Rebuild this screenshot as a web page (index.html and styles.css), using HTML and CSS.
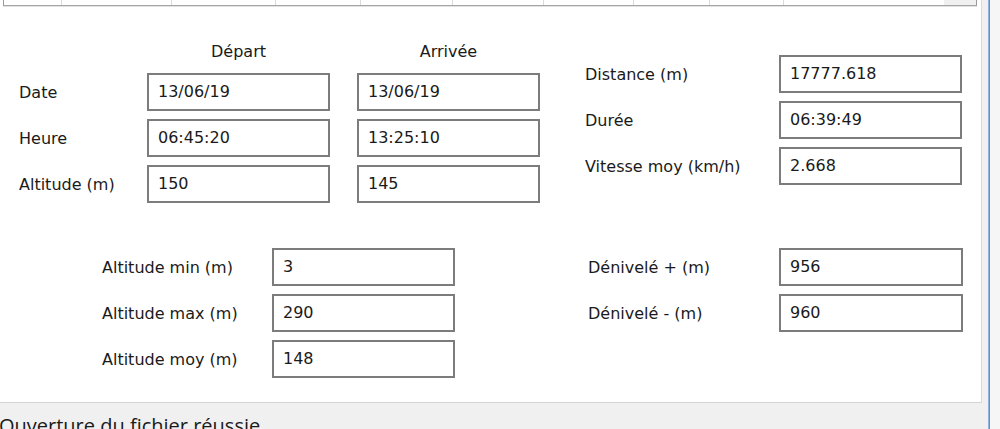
FILE: index.html
```html
<!DOCTYPE html>
<html lang="fr">
<head>
<meta charset="utf-8">
<title>Trace</title>
<link rel="stylesheet" href="styles.css">
</head>
<body>
<div class="window">
  <div class="main">
    <div class="panel">
      <div class="grid-view">
        <div class="gcell c1"></div>
        <div class="gcell c2"></div>
        <div class="gcell c3"></div>
        <div class="gcell c4"></div>
        <div class="gcell c5"></div>
        <div class="gcell c6"></div>
        <div class="gcell c7"></div>
        <div class="gcell c8"></div>
        <div class="gcell c9"></div>
        <div class="gcell c10"></div>
        <div class="gscroll"></div>
      </div>
      <div class="form">
        <div class="section top">
          <div class="grp grp-trip">
            <span class="hdr-empty"></span>
            <div class="hdr">Départ</div>
            <div class="hdr">Arrivée</div>
            <div class="lbl">Date</div>
            <div class="box">13/06/19</div>
            <div class="box">13/06/19</div>
            <div class="lbl">Heure</div>
            <div class="box">06:45:20</div>
            <div class="box">13:25:10</div>
            <div class="lbl">Altitude (m)</div>
            <div class="box">150</div>
            <div class="box">145</div>
          </div>
          <div class="grp grp-stats">
            <div class="lbl">Distance (m)</div>
            <div class="box">17777.618</div>
            <div class="lbl">Durée</div>
            <div class="box">06:39:49</div>
            <div class="lbl">Vitesse moy (km/h)</div>
            <div class="box">2.668</div>
          </div>
        </div>
        <div class="section bottom">
          <div class="grp grp-alt">
            <div class="lbl">Altitude min (m)</div>
            <div class="box">3</div>
            <div class="lbl">Altitude max (m)</div>
            <div class="box">290</div>
            <div class="lbl">Altitude moy (m)</div>
            <div class="box">148</div>
          </div>
          <div class="grp grp-deniv">
            <div class="lbl">Dénivelé + (m)</div>
            <div class="box">956</div>
            <div class="lbl">Dénivelé - (m)</div>
            <div class="box">960</div>
          </div>
        </div>
      </div>
    </div>
    <div class="status">Ouverture du fichier réussie</div>
  </div>
  <div class="splitter"></div>
  <div class="side"></div>
</div>
</body>
</html>
```

FILE: styles.css
```css
html, body {
  margin: 0;
  padding: 0;
  width: 1000px;
  height: 429px;
  overflow: hidden;
  background: #f0f0f0;
}

.window {
  display: flex;
  width: 1000px;
  height: 429px;
}

.main {
  width: 988px;
  height: 429px;
  display: flex;
  flex-direction: column;
  background: #f0f0f0;
  overflow: hidden;
}

.panel {
  flex: none;
  width: 981px;
  height: 402px;
  background: #ffffff;
  border-right: 1px solid #d9d9d9;
  border-bottom: 1px solid #d4d4d4;
  display: flex;
  flex-direction: column;
}

/* remnant of the grid view above the form */
.grid-view {
  display: flex;
  width: 972px;
  height: 5px;
  margin-left: 3px;
  border-left: 1px solid #9a9a9a;
  border-right: 1px solid #9a9a9a;
  border-bottom: 1px solid #a5a5a5;
  box-shadow: 0 1px 0 #e2e2e2;
  flex: none;
}

.gcell {
  height: 5px;
  border-right: 1px solid #dadada;
  box-sizing: border-box;
}

.c1 { width: 58px; }
.c2 { width: 110px; }
.c3 { width: 104px; }
.c4 { width: 85px; }
.c5 { width: 92px; }
.c6 { width: 91px; }
.c7 { width: 90px; }
.c8 { width: 76px; }
.c9 { width: 74px; }
.c10 { width: 160px; border-right: none; }

.gscroll {
  flex: 1;
  background: #f0f0f0;
}

.form {
  font-family: "DejaVu Sans", Verdana, sans-serif;
  font-size: 16px;
  color: #1a1a1a;
  flex: 1;
}

.section {
  display: flex;
  align-items: flex-start;
}

.grp {
  display: grid;
  row-gap: 8px;
  grid-auto-rows: 38px;
}

.grp-trip {
  padding-top: 31px;
  padding-left: 19px;
  grid-template-columns: 101px 183px 183px;
  grid-template-rows: 28px;
  column-gap: 27px;
}

.grp-stats {
  padding-top: 49px;
  margin-left: 45px;
  grid-template-columns: 194px 183px;
}

.section.bottom {
  margin-top: 45px;
}

.grp-alt {
  padding-left: 102px;
  grid-template-columns: 170px 183px;
}

.grp-deniv {
  margin-left: 133px;
  grid-template-columns: 191px 184px;
}

.hdr {
  display: flex;
  align-items: center;
  justify-content: center;
}

.lbl {
  display: flex;
  align-items: center;
  white-space: nowrap;
}

.box {
  box-sizing: border-box;
  height: 38px;
  border: 2px solid #7c7c7c;
  background: #ffffff;
  padding-left: 9px;
  display: flex;
  align-items: center;
  padding-bottom: 1px;
}

.status {
  flex: none;
  font-family: "Open Sans", "Noto Sans", sans-serif;
  font-size: 20px;
  color: #1a1a1a;
  padding-top: 11px;
  line-height: 23px;
  white-space: nowrap;
  margin-left: -1px;
}

.splitter {
  width: 2px;
  height: 429px;
  background: #6a8fcf;
  box-shadow: inset 1px 0 0 #8fb0e0;
}

.side {
  flex: 1;
  background: #f6f6f6;
}
```
